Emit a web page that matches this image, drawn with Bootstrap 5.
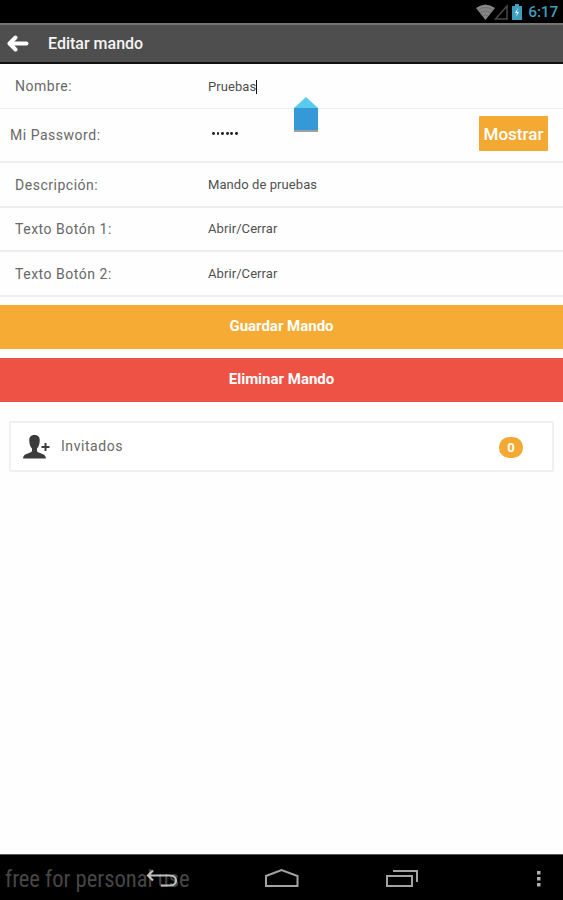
<!DOCTYPE html>
<html lang="es">
<head>
<meta charset="utf-8">
<meta name="viewport" content="width=device-width, initial-scale=1">
<title>Editar mando</title>
<link href="https://cdn.jsdelivr.net/npm/bootstrap@5.3.0/dist/css/bootstrap.min.css" rel="stylesheet">
<style>
body{font-family:Roboto,sans-serif;height:900px;overflow:hidden;background:#fefefe;line-height:20px}
.status{height:23px;padding:1px 5px 0 0;background:#000}
.clock{font-size:15.5px;color:#3f9dbd;font-weight:500;letter-spacing:-.2px;line-height:23px}
.topbar{height:41px;background:#4e4e4e;border-top:2px solid #747474;border-bottom:2px solid #111;padding-left:7px;color:#f5f5f5}
.topbar h1{font-size:16px;font-weight:500;margin-left:19px;line-height:20px}
.frow{border-bottom:2px solid #eee;height:45px;padding-left:15px}
.frow.r1{height:45px;border-bottom-width:1px}
.frow.r2{height:54px;padding:0 15px 0 10px}
.frow.r4{height:44px}
.frow label{width:193px;font-size:14px;letter-spacing:.52px;color:#686868}
.r2 label{width:202px}
.val{font-size:13px;color:#505050;letter-spacing:.08px}
.r1 .val,.r1 .caret{margin-top:1px}
.caret{width:1px;height:14px;background:#111}
.handle{left:293px;top:97px;z-index:2}
.show-btn{background:#f3a932;color:#fff;width:69px;height:35px;font-size:17px;font-weight:500;border-radius:1px;padding:0;border:0;line-height:34px;margin-bottom:3px}
.dots{gap:1.8px;margin-bottom:3px}
.dots i{width:2.8px;height:2.8px;background:#222;border-radius:50%}
.wide{height:44px;border-radius:0;color:#fff;font-size:15px;font-weight:700;padding:0 0 2px;border:0}
.save{background:#f6ac34;margin-top:8px}
.del{background:#ee5244;margin-top:9px}
.guests{margin:19px 9px 0;height:51px;border:2px solid #f0f0f0;border-radius:2px;padding:0 29px 0 12px;background:#fff}
.guests .name{font-size:14px;letter-spacing:.55px;color:#686868;margin-left:10px;margin-top:-1px}
.count{background:#f3a932;color:#fff;width:24px;height:21px;border-radius:10px;font-size:13px;font-weight:700;line-height:21px;padding:0;margin-top:1px}
.sysbar{height:46px;background:#000;border-top:1px solid #555}
.trial{left:5px;top:12px;font-family:"Roboto Condensed",Roboto,sans-serif;font-size:23px;font-weight:400;color:#464646;line-height:26px;transform-origin:0 50%;transform:scaleX(.98)}
.sysbar svg{position:relative;display:block}
</style>
<script src="https://cdn.jsdelivr.net/npm/bootstrap@5.3.0/dist/js/bootstrap.bundle.min.js"></script>
</head>
<body class="d-flex flex-column position-relative">
<div class="status d-flex justify-content-end align-items-center flex-shrink-0">
  <svg width="48" height="19" viewBox="476 2 48 19">
    <path d="M476 7Q485.500 0 495 7L485.500 19Z" fill="#858585"/>
    <path d="M478 9Q485.500 4 493 9M480 12Q485.500 8 491 12M483 15Q485.500 13 488 15" fill="none" stroke="#666" stroke-width=".7"/>
    <path d="M507 5V18H495.500Z" fill="none" stroke="#484848" stroke-width="1.500"/>
    <path d="M512 5h3V3h4v2h3v14h-10z" fill="#3f9dbd"/>
    <path d="M518 7l-3 5h2l-1 4 3-5h-2z" fill="#e6f7fc"/>
  </svg>
  <span class="clock ms-1">6:17</span>
</div>
<header class="topbar d-flex align-items-center flex-shrink-0">
  <svg width="22" height="20" viewBox="0 0 22 20"><path d="M8.500 3.500L2.500 9.500l6 6M3 9.500H19.500" fill="none" stroke="#fff" stroke-width="4" stroke-linecap="round" stroke-linejoin="round"/></svg>
  <h1 class="mb-0">Editar mando</h1>
</header>
<main class="flex-grow-1">
  <div class="frow r1 d-flex align-items-center"><label>Nombre:</label><span class="val">Pruebas</span><span class="caret"></span></div>
  <div class="frow r2 d-flex align-items-center"><label>Mi Password:</label><span class="dots d-flex"><i></i><i></i><i></i><i></i><i></i><i></i></span><button class="btn show-btn ms-auto">Mostrar</button></div>
  <div class="frow d-flex align-items-center"><label>Descripción:</label><span class="val">Mando de pruebas</span></div>
  <div class="frow r4 d-flex align-items-center"><label>Texto Botón 1:</label><span class="val">Abrir/Cerrar</span></div>
  <div class="frow d-flex align-items-center"><label>Texto Botón 2:</label><span class="val">Abrir/Cerrar</span></div>
  <button class="btn wide save w-100 d-block">Guardar Mando</button>
  <button class="btn wide del w-100 d-block">Eliminar Mando</button>
  <div class="guests d-flex align-items-center">
    <svg width="28" height="24" viewBox="0 0 28 24"><path d="M11.500 0C7.500 0 6 2.500 6.300 6 6.400 9.500 7.500 12 9 13.500V16C8.500 18.500 0 18 0 23.500H23C23 18 14.500 18.500 14 16V13.500C15.500 12 16.600 9.500 16.700 6 17 2.500 15.500 0 11.500 0Z" fill="#3c3c3c"/><path d="M22.500 8v8M18.500 12h8" stroke="#3c3c3c" stroke-width="2"/></svg>
    <span class="name">Invitados</span>
    <span class="count badge ms-auto">0</span>
  </div>
</main>
<svg class="handle position-absolute" width="26" height="37" viewBox="0 0 26 37"><path d="M1 12h24v23H1z" fill="#777" opacity=".7"/><path d="M1 11L13 0 25 11Z" fill="#5bcbed"/><path d="M1 11h24v22H1z" fill="#3599d7"/></svg>
<footer class="sysbar position-relative flex-shrink-0">
  <span class="trial position-absolute text-nowrap">free for personal use</span>
  <svg width="563" height="45" viewBox="0 855 563 45" fill="none" stroke="#a3a3a3" stroke-width="2">
    <path d="M153 870.500l-5 5 5 5M148 875.500h22c8 0 8 10 0 10h-9" stroke="#c0c0c0" stroke-width="2.200"/>
    <path d="M266 886v-10l15.500-6 16 6v10z"/>
    <path d="M387 876h25v10h-25zM393 871h24v11"/>
    <path d="M537 871h3.500v3.500h-3.500zM537 877h3.500v3.500h-3.500zM537 883h3.500v3.500h-3.500z" fill="#b0b0b0" stroke="none"/>
  </svg>
</footer>
</body>
</html>
